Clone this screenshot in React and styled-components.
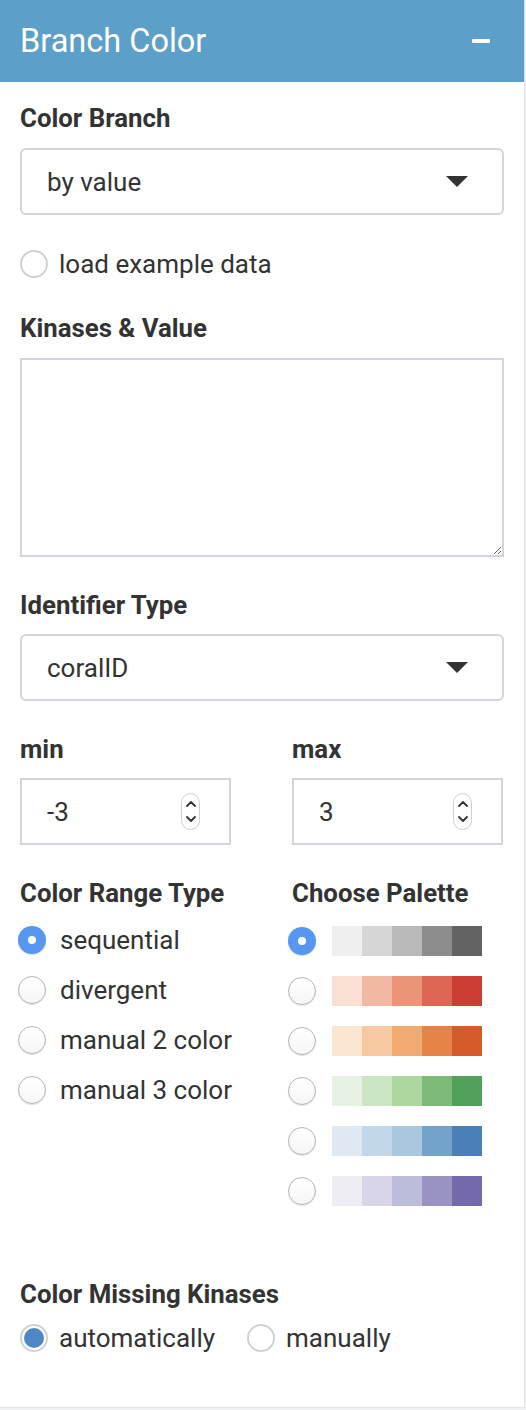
import React from "react";
import styled, { createGlobalStyle, css } from "styled-components";

const Global = createGlobalStyle`
  html, body { margin: 0; padding: 0; }
  body {
    background: #eef0f4;
    font-family: Roboto, "Noto Sans", "Liberation Sans", sans-serif;
    color: #333;
  }
`;

const Panel = styled.section`
  width: 524px;
  background: #fff;
  border-right: 1px solid #e2e4e8;
  border-bottom: 1px solid #e2e4e8;
`;

const Header = styled.header`
  height: 82px;
  background: #5ca0c9;
  display: flex;
  align-items: center;
  justify-content: space-between;
  padding: 0 34px 0 20px;
`;

const Title = styled.h3`
  margin: 0;
  font-weight: 400;
  font-size: 32.5px;
  color: #fff;
`;

const Minus = styled.span`
  width: 18px;
  height: 4px;
  background: #fff;
  border-radius: 1px;
`;

const Body = styled.div`
  padding: 22px 20px 55px 20px;
  display: flex;
  flex-direction: column;
`;

const Label = styled.div`
  font-size: 25.8px;
  font-weight: 700;
  line-height: 29px;
  color: #333;
  white-space: nowrap;
  margin-top: ${(p) => p.$mt || 0}px;
  margin-bottom: ${(p) => (p.$mb === undefined ? 15 : p.$mb)}px;
`;

const Select = styled.div`
  height: 67px;
  box-sizing: border-box;
  border: 2px solid #d2d6dc;
  border-radius: 6px;
  display: flex;
  align-items: center;
  justify-content: space-between;
  padding: 0 34px 0 25px;
  font-size: 26px;
  color: #333;
`;

const Caret = styled.span`
  width: 0;
  height: 0;
  border-left: 11px solid transparent;
  border-right: 11px solid transparent;
  border-top: 11px solid #333;
`;

const RadioRow = styled.label`
  display: flex;
  align-items: center;
  height: 28px;
  font-size: 26px;
  color: #333;
  white-space: nowrap;
  gap: ${(p) => p.$gap || 11}px;
  margin-top: ${(p) => p.$mt || 0}px;
`;

const Radio = styled.span`
  flex: none;
  width: 28px;
  height: 28px;
  box-sizing: border-box;
  border-radius: 50%;
  display: flex;
  align-items: center;
  justify-content: center;
  margin-left: ${(p) => p.$ml || 0}px;
  ${(p) =>
    p.$kind === "mac"
      ? css`
          background: #5897f0;
          box-shadow: 0 1px 1px rgba(0, 0, 0, 0.15);
          &::after {
            content: "";
            width: 8px;
            height: 8px;
            border-radius: 50%;
            background: #fff;
          }
        `
      : p.$kind === "filled"
      ? css`
          border: 2px solid #cfd2d6;
          background: #fff;
          &::after {
            content: "";
            width: 20px;
            height: 20px;
            border-radius: 50%;
            background: #4f87c6;
          }
        `
      : p.$kind === "plain"
      ? css`
          border: 2px solid #cfd2d6;
          background: #fff;
        `
      : css`
          background: linear-gradient(#fff, #f6f6f6);
          border: 1px solid #b4b4b4;
          box-shadow: 0 1px 1px rgba(0, 0, 0, 0.12);
        `}
`;

const TextArea = styled.textarea`
  display: block;
  width: 100%;
  height: 199px;
  box-sizing: border-box;
  border: 2px solid #d2d6dc;
  border-radius: 0;
  resize: vertical;
  margin: 0;
  font-family: inherit;
  font-size: 26px;
  outline: none;
`;

const TwoCol = styled.div`
  display: grid;
  grid-template-columns: 211px 211px;
  column-gap: 61px;
  margin-top: ${(p) => p.$mt || 0}px;
`;

const Col = styled.div`
  display: flex;
  flex-direction: column;
`;

const NumberBox = styled.div`
  height: 67px;
  box-sizing: border-box;
  border: 2px solid #d2d6dc;
  display: flex;
  align-items: center;
  justify-content: space-between;
  padding: 0 29px 0 25px;
  font-size: 26px;
  color: #333;
`;

const Spinner = styled.span`
  width: 19px;
  height: 37px;
  box-sizing: border-box;
  border: 1px solid #cfcfcf;
  border-radius: 10px;
  display: flex;
  align-items: center;
  justify-content: center;
  background: #fff;
`;

const RadioList = styled.div`
  display: flex;
  flex-direction: column;
  gap: ${(p) => p.$gap || 22}px;
  margin-top: ${(p) => p.$mt || 0}px;
`;

const PaletteRow = styled.div`
  display: flex;
  align-items: center;
  gap: 16px;
  height: 30px;
`;

const Swatches = styled.div`
  display: flex;
`;

const Swatch = styled.span`
  width: 30px;
  height: 30px;
  background: ${(p) => p.$c};
`;

const Inline = styled.div`
  display: flex;
  align-items: center;
  gap: 32px;
  margin-top: 15px;
`;

const palettes = [
  ["#efefef", "#d6d6d6", "#b9b9b9", "#8d8d8d", "#636363"],
  ["#fae0d3", "#f1b9a3", "#eb9477", "#dc6654", "#ca3e33"],
  ["#fbe6d2", "#f6c9a0", "#f1ab72", "#e48447", "#d45c2a"],
  ["#e7f3e2", "#cbe6c3", "#acd8a0", "#7dba78", "#53a05c"],
  ["#dfe9f4", "#c2d8ea", "#a9c8e0", "#73a2cb", "#4a7fb8"],
  ["#efedf4", "#d7d5e7", "#bcbcdb", "#9893c3", "#7369ab"],
];

const rangeTypes = ["sequential", "divergent", "manual 2 color", "manual 3 color"];

function SpinIcon() {
  return (
    <Spinner>
      <svg width="12" height="27" viewBox="0 0 12 27">
        <path d="M2 8 L6 4 L10 8" fill="none" stroke="#333" strokeWidth="1.8" strokeLinecap="round" strokeLinejoin="round" />
        <path d="M2 19 L6 23 L10 19" fill="none" stroke="#333" strokeWidth="1.8" strokeLinecap="round" strokeLinejoin="round" />
      </svg>
    </Spinner>
  );
}

export default function App() {
  return (
    <>
      <Global />
      <Panel>
        <Header>
          <Title>Branch Color</Title>
          <Minus />
        </Header>
        <Body>
          <Label>Color Branch</Label>
          <Select>
            <span>by value</span>
            <Caret />
          </Select>
          <RadioRow $mt={35}>
            <Radio $kind="plain" />
            load example data
          </RadioRow>

          <Label $mt={36}>Kinases &amp; Value</Label>
          <TextArea />

          <Label $mt={34} $mb={14}>Identifier Type</Label>
          <Select>
            <span>coralID</span>
            <Caret />
          </Select>

          <TwoCol $mt={34}>
            <Col>
              <Label $mb={14}>min</Label>
              <NumberBox>
                <span>-3</span>
                <SpinIcon />
              </NumberBox>
            </Col>
            <Col>
              <Label $mb={14}>max</Label>
              <NumberBox>
                <span>3</span>
                <SpinIcon />
              </NumberBox>
            </Col>
          </TwoCol>

          <TwoCol $mt={34}>
            <Col>
              <Label $mb={0}>Color Range Type</Label>
              <RadioList $mt={18}>
                {rangeTypes.map((t, i) => (
                  <RadioRow key={t} $gap={14}>
                    <Radio $ml={-2} $kind={i === 0 ? "mac" : "mac-off"} />
                    {t}
                  </RadioRow>
                ))}
              </RadioList>
            </Col>
            <Col>
              <Label $mb={0}>Choose Palette</Label>
              <RadioList $mt={18} $gap={20}>
                {palettes.map((p, i) => (
                  <PaletteRow key={i}>
                    <Radio $ml={-4} $kind={i === 0 ? "mac" : "mac-off"} />
                    <Swatches>
                      {p.map((c) => (
                        <Swatch key={c} $c={c} />
                      ))}
                    </Swatches>
                  </PaletteRow>
                ))}
              </RadioList>
            </Col>
          </TwoCol>

          <Label $mt={74} $mb={0}>Color Missing Kinases</Label>
          <Inline>
            <RadioRow>
              <Radio $kind="filled" />
              automatically
            </RadioRow>
            <RadioRow>
              <Radio $kind="plain" />
              manually
            </RadioRow>
          </Inline>
        </Body>
      </Panel>
    </>
  );
}
